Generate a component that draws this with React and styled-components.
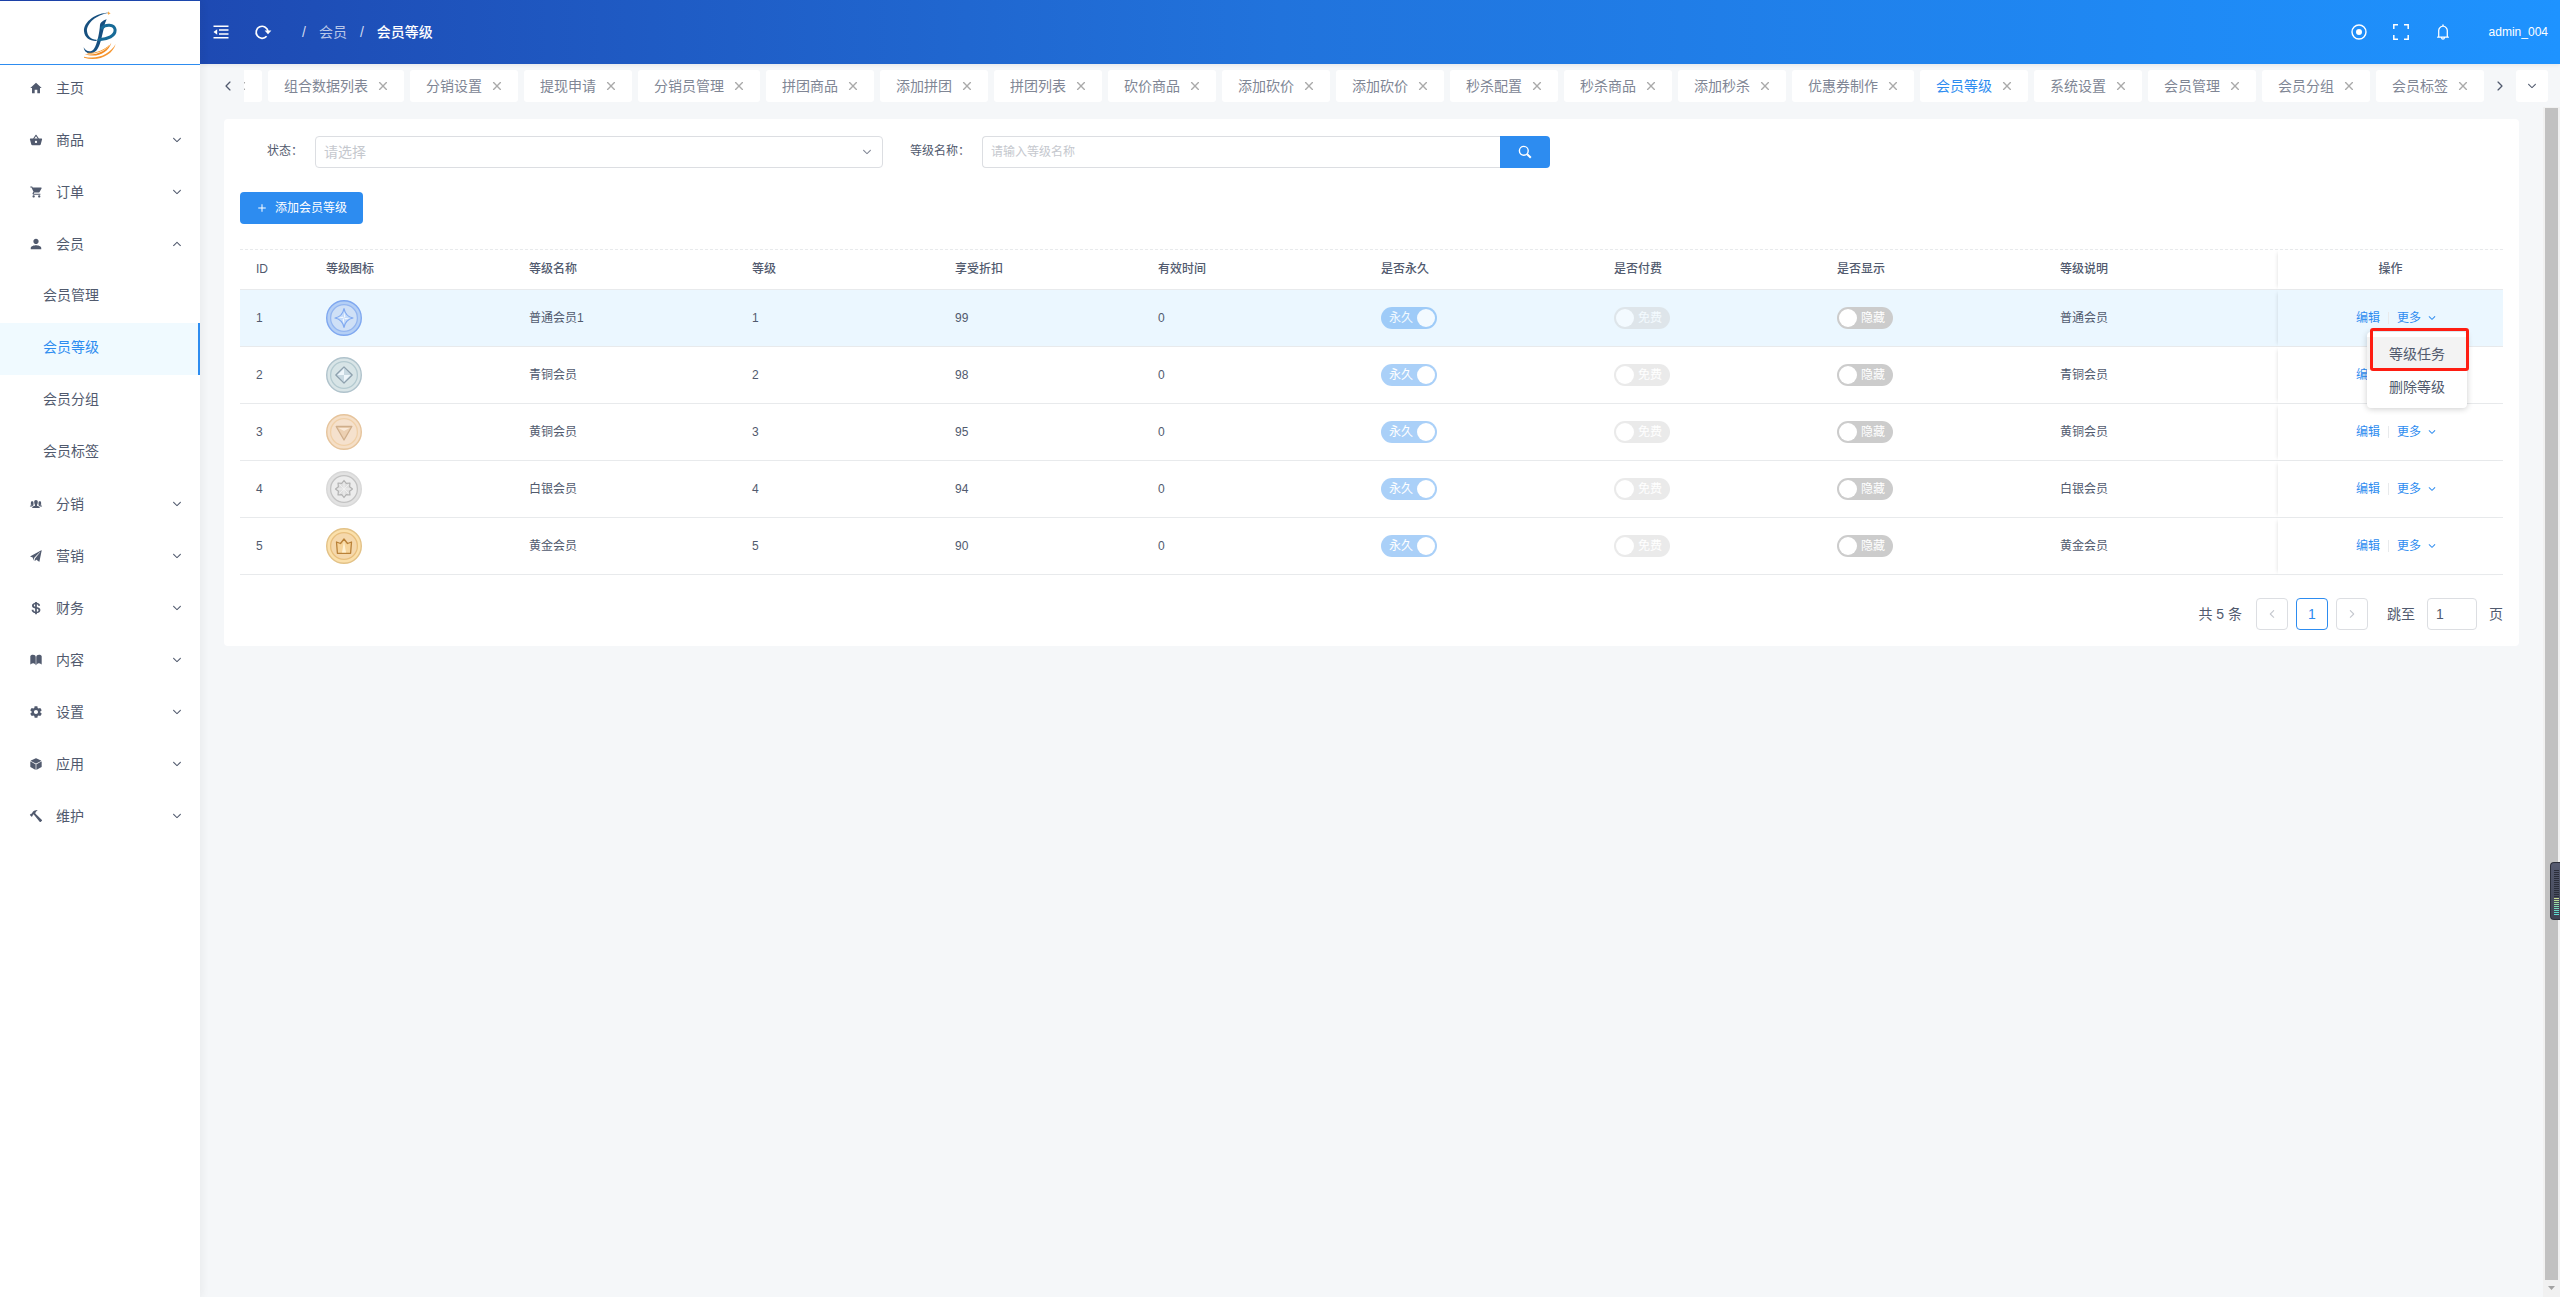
import React from "react";
import styled, { createGlobalStyle } from "styled-components";
import {
  IoMdHome,
  IoMdBasket,
  IoMdCart,
  IoMdPerson,
  IoIosPeople,
  IoIosPaperPlane,
  IoLogoUsd,
  IoIosBook,
  IoMdSettings,
  IoIosCube,
  IoMdHammer,
  IoIosArrowDown,
  IoIosArrowUp,
  IoIosArrowBack,
  IoIosArrowForward,
  IoIosClose,
  IoMdAdd,
} from "react-icons/io";
import { AiOutlineBell } from "react-icons/ai";

const GlobalStyle = createGlobalStyle`
  *, *::before, *::after { box-sizing: border-box; }
  body {
    margin: 0;
    background: #f5f7f9;
    color: #515a6e;
    font-family: "Liberation Sans", "Noto Sans CJK SC", sans-serif;
    font-size: 14px;
    line-height: 20px;
  }
  button, input, select { font: inherit; color: inherit; margin: 0; }
  button { border: 0; padding: 0; background: none; cursor: pointer; }
  a { color: inherit; text-decoration: none; }
  ul { list-style: none; margin: 0; padding: 0; }
  svg { display: block; flex: none; }
`;

const Page = styled.div`
  display: flex;
  flex-direction: column;
  min-height: 100vh;
  background: linear-gradient(90deg, #1d42ab, #2173dc, #1e93ff) top / 100% 64px no-repeat #f5f7f9;
`;

const Shell = styled.div`
  flex: 1;
  display: flex;
`;

/* ---------- sidebar ---------- */

const Sidebar = styled.aside`
  flex: none;
  width: 200px;
  margin-top: 1px;
  background: #fff;
  z-index: 2;
  box-shadow: 2px 0 8px rgba(29, 35, 41, 0.06);
`;

const LogoLink = styled.a`
  display: flex;
  justify-content: center;
  align-items: center;
  height: 64px;
  padding-top: 4px;
  border-bottom: 1px solid #2d8cf0;
`;

const MenuItem = styled.li`
  padding-bottom: 2px;
`;

const MenuButton = styled.button`
  display: flex;
  align-items: center;
  gap: 13px;
  width: 100%;
  height: 50px;
  padding: 0 17px 5px 29px;
  text-align: left;
`;

const MenuLabel = styled.span`
  flex: 1;
`;

const SubLink = styled.a`
  display: flex;
  align-items: center;
  height: 52px;
  padding: 0 0 5px 43px;
  color: ${(p) => (p.$active ? "#2d8cf0" : "#515a6e")};
  background: ${(p) => (p.$active ? "#f0faff" : "transparent")};
  border-right: 2px solid ${(p) => (p.$active ? "#2d8cf0" : "transparent")};
`;

/* ---------- top bar ---------- */

const Main = styled.div`
  flex: 1;
  min-width: 0;
  display: flex;
  flex-direction: column;
`;

const Header = styled.header`
  display: flex;
  align-items: center;
  height: 64px;
  color: #fff;
  box-shadow: 0 1px 4px rgba(0, 21, 41, 0.08);
`;

const HeaderButton = styled.button`
  display: flex;
  align-items: center;
  justify-content: center;
  width: 42px;
  height: 64px;
  color: #fff;
`;

const Breadcrumb = styled.nav`
  flex: 1;
  display: flex;
  gap: 13px;
  padding-left: 18px;
`;

const Crumb = styled.a`
  color: ${(p) => (p.$current ? "#fff" : "rgba(255, 255, 255, 0.7)")};
  font-weight: ${(p) => (p.$current ? 500 : 400)};
`;

const CrumbSlash = styled.span`
  color: rgba(255, 255, 255, 0.8);
`;

const UserLink = styled.a`
  padding: 0 12px 0 25px;
  font-size: 12px;
`;

/* ---------- tabs ---------- */

const TabBar = styled.div`
  display: flex;
  height: 43px;
  padding: 6px 12px 0 12px;
`;

const ArrowButton = styled.button`
  display: flex;
  align-items: center;
  justify-content: center;
  width: 32px;
  height: 32px;
`;

const TabWindow = styled.div`
  flex: 1;
  min-width: 0;
  display: flex;
  justify-content: flex-end;
  gap: 6px;
  overflow: hidden;
`;

const Tab = styled.div`
  flex: none;
  display: flex;
  align-items: center;
  gap: 4px;
  height: 32px;
  padding: 0 10px 0 16px;
  background: #fff;
  border-radius: 3px;
  color: ${(p) => (p.$active ? "#2d8cf0" : "#808695")};
`;

const CloseButton = styled.button`
  display: flex;
  color: #aaa;
`;

const TabMenuButton = styled(ArrowButton)`
  background: #fff;
  border-radius: 3px;
`;

/* ---------- content ---------- */

const Body = styled.div`
  flex: 1;
  display: flex;
`;

const Content = styled.main`
  flex: 1;
  min-width: 0;
  padding: 12px 24px 24px;
`;

const Card = styled.section`
  padding: 17px 16px 16px;
  background: #fff;
  border-radius: 4px;
`;

const FilterForm = styled.form`
  display: flex;
  gap: 24px;
  margin-bottom: 24px;
`;

const Field = styled.div`
  display: flex;
  width: calc((100% + 24px) * 7 / 24 - 24px);
`;

const FieldLabel = styled.label`
  flex: none;
  width: 75px;
  padding-right: 12px;
  font-size: 12px;
  line-height: 30px;
  text-align: right;
  white-space: nowrap;
`;

const SelectBox = styled.div`
  flex: 1;
  display: grid;
  align-items: center;

  > * { grid-area: 1 / 1; }
  > svg { justify-self: end; margin-right: 10px; color: #808695; pointer-events: none; }
`;

const Select = styled.select`
  width: 100%;
  height: 32px;
  padding: 0 24px 0 8px;
  appearance: none;
  background: #fff;
  border: 1px solid #dcdee2;
  border-radius: 4px;
  color: #c5c8ce;
`;

const SearchInput = styled.input`
  flex: 1;
  min-width: 0;
  height: 32px;
  padding: 0 8px;
  border: 1px solid #dcdee2;
  border-right: 0;
  border-radius: 4px 0 0 4px;
  font-size: 12px;

  &::placeholder { color: #c5c8ce; }
`;

const SearchButton = styled.button`
  display: flex;
  align-items: center;
  justify-content: center;
  width: 50px;
  height: 32px;
  background: #2d8cf0;
  border-radius: 0 4px 4px 0;
  color: #fff;
`;

const PrimaryButton = styled.button`
  display: flex;
  align-items: center;
  gap: 7px;
  height: 32px;
  padding: 0 16px;
  background: #2d8cf0;
  border-radius: 4px;
  color: #fff;
  font-size: 12px;
`;

const Table = styled.table`
  width: 100%;
  margin: 25px 0 23px;
  table-layout: fixed;
  border-collapse: separate;
  border-spacing: 0;
  border-top: 1px dashed #e8eaec;
  font-size: 12px;
`;

const Th = styled.th`
  height: 40px;
  padding: 0 16px 2px;
  border-bottom: 1px solid #e8eaec;
  background: #fff;
  font-weight: 500;
  text-align: ${(p) => (p.$fixed ? "center" : "left")};
  box-shadow: ${(p) => (p.$fixed ? "-3px 0 4px -3px rgba(0, 0, 0, 0.14)" : "none")};
`;

const Td = styled.td`
  height: 57px;
  padding: 0 16px;
  border-bottom: 1px solid #e8eaec;
  background: ${(p) => (p.$hover ? "#ebf7ff" : "#fff")};
  box-shadow: ${(p) => (p.$fixed ? "-3px 0 4px -3px rgba(0, 0, 0, 0.14)" : "none")};
`;

const SwitchTrack = styled.label`
  display: flex;
  flex-direction: ${(p) => (p.$on ? "row-reverse" : "row")};
  align-items: center;
  gap: 4px;
  width: 56px;
  height: 22px;
  padding: 0 2px;
  border-radius: 11px;
  background: ${(p) => (p.$on ? "#2d8cf0" : "#ccc")};
  opacity: ${(p) => (p.$disabled ? 0.4 : 1)};
  color: #fff;
  line-height: 22px;
`;

const SwitchInput = styled.input`
  appearance: none;
  width: 18px;
  height: 18px;
  background: #fff;
  border-radius: 50%;
`;

const Actions = styled.div`
  display: flex;
  align-items: center;
  justify-content: center;
  padding-left: 12px;
  color: #2d8cf0;
`;

const Divider = styled.span`
  width: 1px;
  height: 12px;
  margin: 0 8px;
  background: #e8eaec;
`;

const MoreWrap = styled.div`
  position: relative;
`;

const MoreButton = styled.button`
  display: flex;
  align-items: center;
  gap: 6px;
`;

const Dropdown = styled.ul`
  position: absolute;
  z-index: 5;
  top: 24px;
  left: 50%;
  width: 100px;
  margin-left: -50px;
  padding: 5px 0;
  background: #fff;
  border-radius: 4px;
  box-shadow: 0 1px 6px rgba(0, 0, 0, 0.2);
`;

const DropdownButton = styled.button`
  display: block;
  width: 100%;
  height: 33px;
  background: ${(p) => (p.$hover ? "#f3f3f3" : "transparent")};
  color: #515a6e;
  font-size: 14px;
`;

const Highlight = styled.li`
  position: absolute;
  top: -4px;
  left: 3px;
  width: 99px;
  height: 43px;
  border: 3px solid #fe1d12;
  border-radius: 3px;
  pointer-events: none;
`;

const Pager = styled.nav`
  display: flex;
  align-items: center;
  justify-content: flex-end;
  gap: 8px;
`;

const PagerText = styled.span`
  margin-right: 6px;
`;

const PagerButton = styled.button`
  display: flex;
  align-items: center;
  justify-content: center;
  width: 32px;
  height: 32px;
  border: 1px solid ${(p) => (p.$active ? "#2d8cf0" : "#dcdee2")};
  border-radius: 4px;
  background: #fff;
  color: ${(p) => (p.$active ? "#2d8cf0" : "#c5c8ce")};
`;

const Jumper = styled.label`
  display: flex;
  align-items: center;
  gap: 12px;
  margin-left: 11px;
`;

const JumpInput = styled.input`
  width: 50px;
  height: 32px;
  padding: 0 8px;
  border: 1px solid #dcdee2;
  border-radius: 4px;
`;

/* ---------- scroll bar and floating meter ---------- */

const ScrollTrack = styled.div`
  flex: none;
  display: flex;
  flex-direction: column;
  align-items: center;
  width: 17px;
  padding: 1px 0 7px;
  background: #f1f1f1;
`;

const ScrollThumb = styled.div`
  flex: 1;
  width: 13px;
  margin-bottom: 6px;
  background: #c1c1c1;
`;

const Meter = styled.div`
  position: fixed;
  z-index: 6;
  right: 0;
  top: 862px;
  width: 10px;
  height: 58px;
  padding: 7px 1px 0 3px;
  background: linear-gradient(#565b70, #3f4353);
  border: 1px solid #2c2f3b;
  border-right: 0;
  border-radius: 4px 0 0 4px;
`;

const MeterBar = styled.div`
  height: 1px;
  margin-bottom: 1px;
  background: ${(p) => p.$color};
`;

const MENU = [
  { label: "主页", icon: IoMdHome, leaf: true },
  { label: "商品", icon: IoMdBasket },
  { label: "订单", icon: IoMdCart },
  { label: "会员", icon: IoMdPerson, children: ["会员管理", "会员等级", "会员分组", "会员标签"] },
  { label: "分销", icon: IoIosPeople },
  { label: "营销", icon: IoIosPaperPlane },
  { label: "财务", icon: IoLogoUsd },
  { label: "内容", icon: IoIosBook },
  { label: "设置", icon: IoMdSettings },
  { label: "应用", icon: IoIosCube },
  { label: "维护", icon: IoMdHammer },
];

/* The leading empty entry is the tab scrolled out on the left. */
const TABS = [
  "", "组合数据列表", "分销设置", "提现申请", "分销员管理", "拼团商品", "添加拼团", "拼团列表",
  "砍价商品", "添加砍价", "添加砍价", "秒杀配置", "秒杀商品", "添加秒杀", "优惠券制作", "会员等级",
  "系统设置", "会员管理", "会员分组", "会员标签",
];

const COLUMNS = [
  ["ID", 70], ["等级图标", 203], ["等级名称", 223], ["等级", 203], ["享受折扣", 203], ["有效时间", 223],
  ["是否永久", 233], ["是否付费", 223], ["是否显示", 223], ["等级说明", 234], ["操作", 225],
];

const ROWS = [
  { id: 1, name: "普通会员1", discount: 99, note: "普通会员" },
  { id: 2, name: "青铜会员", discount: 98, note: "青铜会员" },
  { id: 3, name: "黄铜会员", discount: 95, note: "黄铜会员" },
  { id: 4, name: "白银会员", discount: 94, note: "白银会员" },
  { id: 5, name: "黄金会员", discount: 90, note: "黄金会员" },
];

const MEDALS = {
  1: { rim: "#7fa8f0", band: "#b4cff5", ring: "#94b6f0", core: "#cfe0f6" },
  2: { rim: "#b0c3cc", band: "#d9e5e7", ring: "#b4cad0", core: "#d7e4e6" },
  3: { rim: "#e6c49c", band: "#f5dfc7", ring: "#f0d0a8", core: "#f5e1cd" },
  4: { rim: "#d8d8d8", band: "#e2e2e2", ring: "#c2c2c2", core: "#ececec" },
  5: { rim: "#e3c287", band: "#fbe0ab", ring: "#e8bf7d", core: "#f5d8ac" },
};

function Medal({ level }) {
  const m = MEDALS[level];
  return (
    <svg width="36" height="36" viewBox="0 0 36 36" fill="none" strokeLinejoin="round">
      <circle cx="18" cy="18" r="17.3" fill={m.band} stroke={m.rim} strokeWidth="1.4" />
      <circle cx="18" cy="18" r="13.4" fill={m.core} stroke={m.ring} strokeWidth="1.3" />
      {level === 1 && (
        <>
          <path d="M18 8.5Q19.5 16.5 27 18Q19.5 19.5 18 27.5Q16.5 19.5 9 18Q16.5 16.5 18 8.5Z" fill="#c4dbf9" stroke="#7fa8f0" strokeWidth="1.2" />
          <path d="M18 12L19.5 16.5L18 18ZM24 18L19.5 19.5L18 18ZM18 24L16.5 19.5L18 18ZM12 18L16.5 16.5L18 18Z" fill="#f2f8ff" />
        </>
      )}
      {level === 2 && (
        <>
          <path d="M18 9.8L26.2 18L18 26.2L9.8 18Z" fill="#c8d9e2" stroke="#8c9fac" strokeWidth="1.2" />
          <path d="M18 11.5V18H11.5ZM18 24.5V18H24.5Z" fill="#eef6fb" />
        </>
      )}
      {level === 3 && (
        <>
          <path d="M10.2 12.5H25.8L18 26Z" fill="#ecd0b2" stroke="#cfae8b" strokeWidth="1.3" />
          <path d="M12.5 14H23.5L18 17Z" fill="#fae9d8" />
        </>
      )}
      {level === 4 && (
        <>
          <path d="M18 9.5L20.3 12.4L24 12L23.6 15.7L26.5 18L23.6 20.3L24 24L20.3 23.6L18 26.5L15.7 23.6L12 24L12.4 20.3L9.5 18L12.4 15.7L12 12L15.7 12.4Z" fill="#dfdfdf" stroke="#b2b2b2" strokeWidth="1.2" />
          <path d="M18 11.5V24.5M11.5 18H24.5M13.5 13.5L22.5 22.5M22.5 13.5L13.5 22.5" stroke="#f3f3f3" strokeWidth="0.8" />
        </>
      )}
      {level === 5 && (
        <>
          <path d="M10.5 14L14.5 15.5L18 11L21.5 15.5L25.5 14L24.6 25.3H11.4Z" fill="#f6d49b" stroke="#b98138" strokeWidth="1.3" />
          <path d="M18 13L20 24.5H16Z" fill="#fff0d0" />
        </>
      )}
    </svg>
  );
}

function Logo() {
  return (
    <svg width="34" height="48" viewBox="51 31 102 144" fill="none" strokeLinecap="round">
      <path d="M128 36C92 36 52 62 54 92C56 112 72 122 92 121C92 118 92 118 91 117C75 117 65 107 63 92C61 66 94 42 128 36Z" fill="#17507f" />
      <path d="M122 56C110 60 103 66 102 72C101 92 94 130 84 144C76 156 60 154 53 140C54 152 64 160 75 158C95 154 100 136 106 114L117 68Z" fill="#174f80" />
      <path d="M108 82C118 70 144 70 147 86C150 106 124 116 99 117" stroke="#176a97" strokeWidth="9" />
      <path d="M128 32L130 36L134 38L130 40L128 43L126 39L123 37L126 36Z" fill="#f7a440" />
      <path d="M56 160C90 166 122 150 136 126C126 160 88 172 56 160Z" fill="#f38b22" />
      <path d="M54 168C96 178 132 160 149 130C140 164 96 184 54 171Z" fill="#f5952f" />
      <path d="M66 158C92 160 118 146 128 136" stroke="#f7a440" strokeWidth="3" />
    </svg>
  );
}

function FoldIcon() {
  return (
    <svg width="16" height="16" viewBox="0 0 16 16" fill="none" stroke="currentColor" strokeWidth="1.5">
      <path d="M.5 2.2H15.5M6 6.1H15.5M6 9.9H15.5M.5 13.8H15.5" />
      <path d="M.5 8L4.2 5.2V10.8Z" fill="currentColor" stroke="none" />
    </svg>
  );
}

function ReloadIcon() {
  return (
    <svg width="18" height="16" viewBox="0 0 18 16" fill="none">
      <path d="M12.6 12.3A6 6 0 1 1 14 7" stroke="currentColor" strokeWidth="1.7" />
      <path d="M10.6 6.4H17.4L14 10.2Z" fill="currentColor" />
    </svg>
  );
}

function SearchIcon() {
  return (
    <svg width="14" height="14" viewBox="0 0 14 14" fill="none" stroke="currentColor">
      <circle cx="5.8" cy="5.8" r="4.4" strokeWidth="1.4" />
      <path d="M9.2 9.2L12.8 12.8" strokeWidth="2" />
    </svg>
  );
}

function Switch({ label, on = false, disabled = false }) {
  return (
    <SwitchTrack $on={on} $disabled={disabled}>
      <SwitchInput type="checkbox" role="switch" defaultChecked={on} disabled={disabled} />
      {label}
    </SwitchTrack>
  );
}

function LevelRow({ row, open }) {
  return (
    <tr>
      <Td $hover={open}>{row.id}</Td>
      <Td $hover={open}><Medal level={row.id} /></Td>
      <Td $hover={open}>{row.name}</Td>
      <Td $hover={open}>{row.id}</Td>
      <Td $hover={open}>{row.discount}</Td>
      <Td $hover={open}>0</Td>
      <Td $hover={open}><Switch label="永久" on disabled /></Td>
      <Td $hover={open}><Switch label="免费" disabled /></Td>
      <Td $hover={open}><Switch label="隐藏" /></Td>
      <Td $hover={open}>{row.note}</Td>
      <Td $hover={open} $fixed>
        <Actions>
          <a href="#edit">编辑</a>
          <Divider />
          <MoreWrap>
            <MoreButton type="button">
              更多
              <IoIosArrowDown size={10} />
            </MoreButton>
            {open && (
              <Dropdown>
                <li><DropdownButton type="button" $hover>等级任务</DropdownButton></li>
                <li><DropdownButton type="button">删除等级</DropdownButton></li>
                <Highlight aria-hidden="true" />
              </Dropdown>
            )}
          </MoreWrap>
        </Actions>
      </Td>
    </tr>
  );
}

const METER = [
  ...Array(14).fill("#2b2e3a"),
  "#c9dc8e", "#b4dc95", "#a2dba0", "#90daa9", "#80d9b2", "#72d8ba", "#68d8c2", "#60d8ca", "#5cdcd2",
];

export default function App() {
  return (
    <Page>
      <GlobalStyle />
      <Shell>
        <Sidebar>
          <LogoLink href="#home" aria-label="首页"><Logo /></LogoLink>
          <ul>
            {MENU.map(({ label, icon: Icon, leaf, children }) => (
              <MenuItem key={label}>
                <MenuButton type="button">
                  <Icon size={14} />
                  <MenuLabel>{label}</MenuLabel>
                  {!leaf && (children ? <IoIosArrowUp size={12} /> : <IoIosArrowDown size={12} />)}
                </MenuButton>
                {children && (
                  <ul>
                    {children.map((c) => (
                      <li key={c}><SubLink href="#menu" $active={c === "会员等级"}>{c}</SubLink></li>
                    ))}
                  </ul>
                )}
              </MenuItem>
            ))}
          </ul>
        </Sidebar>

        <Main>
          <Header>
            <HeaderButton type="button" aria-label="收起菜单"><FoldIcon /></HeaderButton>
            <HeaderButton type="button" aria-label="刷新"><ReloadIcon /></HeaderButton>
            <Breadcrumb>
              <CrumbSlash>/</CrumbSlash>
              <Crumb href="#member">会员</Crumb>
              <CrumbSlash>/</CrumbSlash>
              <Crumb href="#level" $current>会员等级</Crumb>
            </Breadcrumb>
            <HeaderButton type="button" aria-label="记录">
              <svg width="16" height="16" viewBox="0 0 16 16" fill="none">
                <circle cx="8" cy="8" r="7" stroke="currentColor" strokeWidth="1.4" />
                <circle cx="8" cy="8" r="3" fill="currentColor" />
              </svg>
            </HeaderButton>
            <HeaderButton type="button" aria-label="全屏">
              <svg width="16" height="16" viewBox="0 0 16 16" fill="none" stroke="currentColor" strokeWidth="1.5">
                <path d="M.8 5V.8H5M11 .8H15.2V5M15.2 11V15.2H11M5 15.2H.8V11" />
              </svg>
            </HeaderButton>
            <HeaderButton type="button" aria-label="通知"><AiOutlineBell size={18} /></HeaderButton>
            <UserLink href="#user">admin_004</UserLink>
          </Header>

          <TabBar>
            <ArrowButton type="button" aria-label="向左"><IoIosArrowBack size={14} /></ArrowButton>
            <TabWindow>
              {TABS.map((t, i) => (
                <Tab key={i} $active={t === "会员等级"}>
                  {t}
                  <CloseButton type="button" aria-label="关闭"><IoIosClose size={22} /></CloseButton>
                </Tab>
              ))}
            </TabWindow>
            <ArrowButton type="button" aria-label="向右"><IoIosArrowForward size={14} /></ArrowButton>
            <TabMenuButton type="button" aria-label="更多标签"><IoIosArrowDown size={12} /></TabMenuButton>
          </TabBar>

          <Body>
            <Content>
              <Card>
                <FilterForm>
                  <Field>
                    <FieldLabel htmlFor="status">状态：</FieldLabel>
                    <SelectBox>
                      <Select id="status" defaultValue="">
                        <option value="">请选择</option>
                      </Select>
                      <IoIosArrowDown size={12} />
                    </SelectBox>
                  </Field>
                  <Field>
                    <FieldLabel htmlFor="levelName">等级名称：</FieldLabel>
                    <SearchInput id="levelName" type="text" placeholder="请输入等级名称" />
                    <SearchButton type="button" aria-label="搜索"><SearchIcon /></SearchButton>
                  </Field>
                </FilterForm>

                <PrimaryButton type="button">
                  <IoMdAdd size={12} />
                  添加会员等级
                </PrimaryButton>

                <Table>
                  <colgroup>
                    {COLUMNS.map(([label, width]) => <col key={label} style={{ width }} />)}
                  </colgroup>
                  <thead>
                    <tr>
                      {COLUMNS.map(([label]) => <Th key={label} $fixed={label === "操作"}>{label}</Th>)}
                    </tr>
                  </thead>
                  <tbody>
                    {ROWS.map((row) => <LevelRow key={row.id} row={row} open={row.id === 1} />)}
                  </tbody>
                </Table>

                <Pager>
                  <PagerText>共 5 条</PagerText>
                  <PagerButton type="button" aria-label="上一页" disabled><IoIosArrowBack size={12} /></PagerButton>
                  <PagerButton type="button" $active>1</PagerButton>
                  <PagerButton type="button" aria-label="下一页" disabled><IoIosArrowForward size={12} /></PagerButton>
                  <Jumper>
                    跳至
                    <JumpInput type="text" defaultValue="1" />
                    页
                  </Jumper>
                </Pager>
              </Card>
            </Content>
            <ScrollTrack aria-hidden="true">
              <ScrollThumb />
              <svg width="7" height="4" viewBox="0 0 7 4"><path d="M0 0H7L3.5 4Z" fill="#a3a3a3" /></svg>
            </ScrollTrack>
          </Body>
        </Main>
      </Shell>
      <Meter aria-hidden="true">
        {METER.map((c, i) => <MeterBar key={i} $color={c} />)}
      </Meter>
    </Page>
  );
}
